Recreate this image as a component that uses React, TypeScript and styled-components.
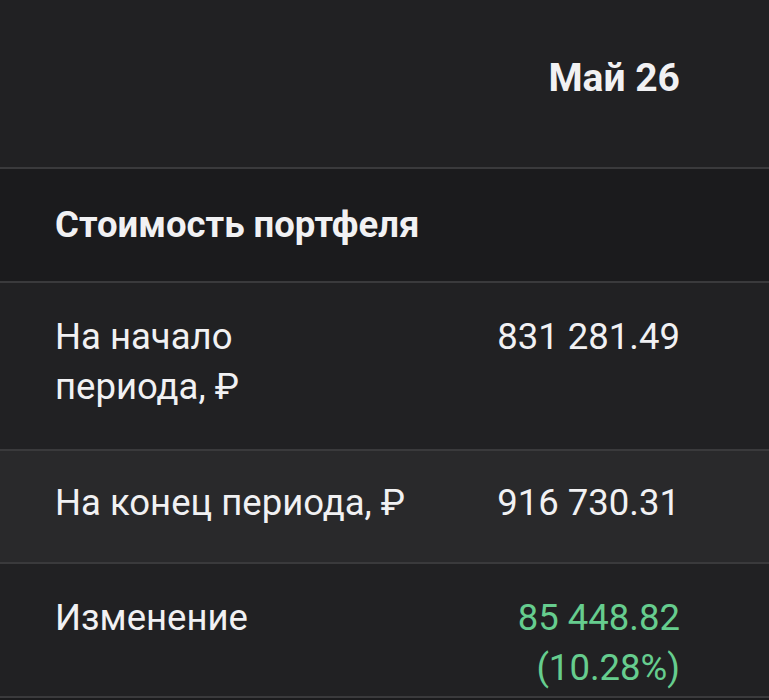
import styled, { createGlobalStyle } from 'styled-components';

const GlobalStyle = createGlobalStyle`
  html, body {
    margin: 0;
    padding: 0;
    background: #1b1b1d;
  }
  body {
    font-family: Roboto, "Noto Sans", "Liberation Sans", sans-serif;
    color: #f1f1f3;
  }
`;

const Table = styled.div`
  width: 769px;
  display: flex;
  flex-direction: column;
`;

const HeaderRow = styled.div`
  height: 169px;
  box-sizing: border-box;
  display: flex;
  align-items: center;
  justify-content: flex-end;
  padding: 0 89px 12px 55px;
  background: #212123;
  border-bottom: 2px solid #3a3a3c;
`;

const MonthTitle = styled.div`
  font-size: 39px;
  font-weight: 700;
  line-height: 48px;
`;

const SectionRow = styled.div`
  height: 114px;
  box-sizing: border-box;
  display: flex;
  align-items: center;
  padding: 0 55px;
  background: #1b1b1d;
  border-bottom: 2px solid #3a3a3c;
`;

const SectionTitle = styled.div`
  font-size: 36.5px;
  font-weight: 700;
  line-height: 50px;
`;

const DataRow = styled.div<{ $shade?: boolean; $top: number; $bottom: number }>`
  display: grid;
  grid-template-columns: 360px 1fr;
  padding: ${(p) => p.$top}px 89px ${(p) => p.$bottom}px 55px;
  background: ${(p) => (p.$shade ? '#29292b' : '#212123')};
  border-bottom: 2px solid #3a3a3c;
  font-size: 36.5px;
  line-height: 50px;
`;

const Label = styled.div``;

const Value = styled.div<{ $positive?: boolean }>`
  text-align: right;
  color: ${(p) => (p.$positive ? '#66cd8e' : '#f1f1f3')};
`;

const App: React.FC = () => {
  return (
    <>
      <GlobalStyle />
      <Table>
        <HeaderRow>
          <MonthTitle>Май 26</MonthTitle>
        </HeaderRow>
        <SectionRow>
          <SectionTitle>Стоимость портфеля</SectionTitle>
        </SectionRow>
        <DataRow $top={29} $bottom={37}>
          <Label>На начало периода,{'\u00a0'}₽</Label>
          <Value>831 281.49</Value>
        </DataRow>
        <DataRow $shade $top={27} $bottom={34}>
          <Label>На конец периода,{'\u00a0'}₽</Label>
          <Value>916 730.31</Value>
        </DataRow>
        <DataRow $top={29} $bottom={3}>
          <Label>Изменение</Label>
          <Value $positive>85 448.82 (10.28%)</Value>
        </DataRow>
      </Table>
    </>
  );
};

export default App;
